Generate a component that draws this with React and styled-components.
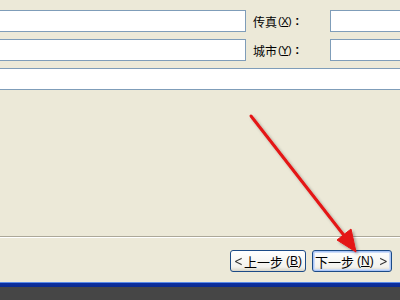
import React from "react";
import styled, { createGlobalStyle } from "styled-components";

const GlobalStyle = createGlobalStyle`
  html, body {
    margin: 0;
    padding: 0;
    background: #ece9d8;
  }
  body {
    font-family: "Noto Sans CJK SC", "Liberation Sans", sans-serif;
  }
`;

const Window = styled.div`
  position: relative;
  width: 400px;
  height: 300px;
  overflow: hidden;
  background: #ece9d8;
  display: flex;
  flex-direction: column;
`;

const Form = styled.div`
  display: grid;
  grid-template-columns: 248px 84px 80px;
  grid-auto-rows: 22px;
  row-gap: 7px;
  margin-left: -2px;
  padding-top: 10px;
`;

const Input = styled.div`
  box-sizing: border-box;
  height: 22px;
  background: #fff;
  border: 1px solid #7f9db9;
  grid-column: ${(p) => (p.$wide ? "1 / -1" : "auto")};
`;

const Label = styled.div`
  display: flex;
  align-items: center;
  padding-left: 7px;
  font-size: 12px;
  color: #000;
  white-space: nowrap;
`;

const Key = styled.span`
  font-family: "Liberation Sans", sans-serif;
  font-size: ${(p) => p.$size || 11}px;
  letter-spacing: ${(p) => (p.$size ? "0" : "-0.5px")};
  margin-left: ${(p) => (p.$size ? 3 : 1)}px;
  u {
    text-decoration: underline;
  }
`;

const Colon = styled.span`
  font-family: "Liberation Sans", sans-serif;
  font-weight: bold;
  font-size: 12px;
  margin-left: 4px;
`;

const Spacer = styled.div`
  flex: 1;
`;

const Separator = styled.div`
  height: 1px;
  background: #aca899;
  border-bottom: 1px solid #fff;
`;

const ButtonBar = styled.div`
  display: flex;
  justify-content: flex-end;
  gap: 6px;
  padding: 12px 8px 0 0;
  height: 32px;
`;

const Button = styled.div`
  box-sizing: border-box;
  width: ${(p) => p.$width}px;
  height: 22px;
  border: 1px solid #1c4b87;
  border-radius: 3px;
  background: linear-gradient(#ffffff, #f3f2ee 80%, #d8d5c8);
  box-shadow: ${(p) =>
    p.$default ? "inset 0 0 0 1px #aac5f7, inset 0 0 0 2px #cddcf8" : "none"};
  display: flex;
  align-items: center;
  justify-content: space-between;
  padding: ${(p) => (p.$default ? "0 4px 0 2px" : "0 3px 0 4px")};
  font-size: 13px;
  color: #000;
  white-space: nowrap;
`;

const Caption = styled.span`
  display: flex;
  align-items: center;
`;

const Chevron = styled.span`
  font-family: "DejaVu Sans", sans-serif;
  font-size: 14px;
  color: #333;
  display: inline-flex;
  justify-content: center;
  width: 7px;
  transform: scaleX(0.75);
`;

const Taskbar = styled.div`
  height: 17px;
  border-top: 1px solid #5b8be8;
  background: linear-gradient(#0c2fa0 0, #0a2a8e 4px, #464646 4px);
`;

const ArrowLayer = styled.svg`
  position: absolute;
  left: 0;
  top: 0;
  pointer-events: none;
`;

const KeyLabel = ({ text, k }) => (
  <Label>
    {text}
    <Key>
      (<u>{k}</u>)
    </Key>
    <Colon>:</Colon>
  </Label>
);

export default function App() {
  return (
    <>
      <GlobalStyle />
      <Window>
        <Form>
          <Input />
          <KeyLabel text="传真" k="X" />
          <Input />
          <Input />
          <KeyLabel text="城市" k="Y" />
          <Input />
          <Input $wide />
        </Form>
        <Spacer />
        <Separator />
        <ButtonBar>
          <Button $width={76}>
            <Chevron>&lt;</Chevron>
            <Caption>
              上一步<Key $size={12}>(<u>B</u>)</Key>
            </Caption>
          </Button>
          <Button $width={80} $default>
            <Caption>
              下一步<Key $size={12}>(<u>N</u>)</Key>
            </Caption>
            <Chevron>&gt;</Chevron>
          </Button>
        </ButtonBar>
        <Taskbar />
        <ArrowLayer width="400" height="300" viewBox="0 0 400 300">
          <defs>
            <filter id="sh" x="-20%" y="-20%" width="140%" height="140%">
              <feDropShadow dx="2" dy="2" stdDeviation="1.5" floodColor="#000" floodOpacity="0.3" />
            </filter>
          </defs>
          <g filter="url(#sh)" fill="#e41414" stroke="#e41414">
            <line x1="251" y1="116" x2="346" y2="238" strokeWidth="3" strokeLinecap="round" />
            <polygon points="356,252 337,240 351,229" strokeWidth="1" strokeLinejoin="round" />
          </g>
        </ArrowLayer>
      </Window>
    </>
  );
}
